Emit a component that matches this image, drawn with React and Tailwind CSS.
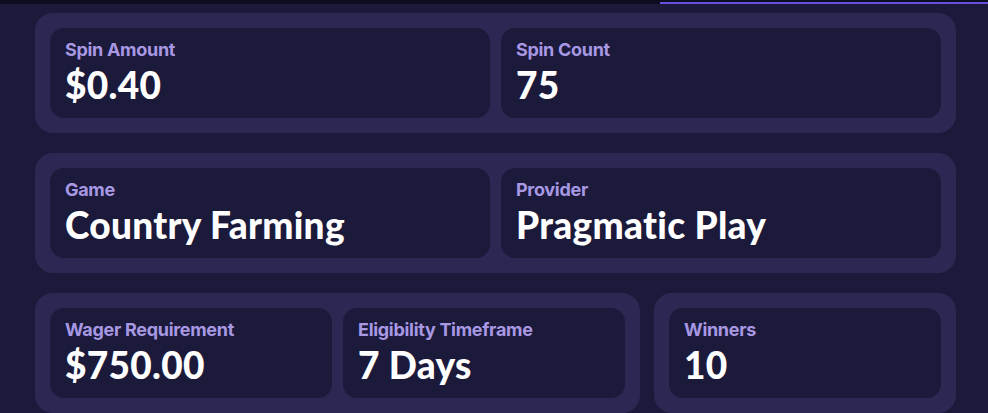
import React from "react";

const StatCard = ({ label, value, className = "" }) => {
  return (
    <div
      className={`flex h-[90px] flex-col rounded-[14px] bg-[#1c1a3b] px-[15px] pt-[12px] ${className}`}
    >
      <span className="font-['Inter',sans-serif] text-[18px] font-bold leading-5 tracking-[-0.3px] text-[#a898e4]">
        {label}
      </span>
      <span className="mt-[5px] font-['Lato',sans-serif] text-[37px] font-black leading-[40px] tracking-[0.3px] text-white">
        {value}
      </span>
    </div>
  );
};

const Panel = ({ children, className = "" }) => {
  return (
    <div
      className={`flex gap-[11px] rounded-[18px] bg-[#2d2853] p-[15px] ${className}`}
    >
      {children}
    </div>
  );
};

const App = () => {
  return (
    <div className="min-h-screen w-full bg-[#1c1a3b]">
      {/* top nav edge with active tab underline */}
      <div className="flex h-[4px] justify-end bg-[#0d0d20]">
        <div className="mt-[2px] h-[2px] w-[328px] bg-[#6c4ee0]" />
      </div>

      <div className="flex w-[921px] flex-col gap-[20px] pl-[35px] pt-[9px] box-content">
        <Panel>
          <StatCard label="Spin Amount" value="$0.40" className="flex-1" />
          <StatCard label="Spin Count" value="75" className="flex-1" />
        </Panel>

        <Panel>
          <StatCard label="Game" value="Country Farming" className="flex-1" />
          <StatCard label="Provider" value="Pragmatic Play" className="flex-1" />
        </Panel>

        <div className="flex gap-[14px]">
          <Panel className="flex-1">
            <StatCard
              label="Wager Requirement"
              value="$750.00"
              className="flex-1"
            />
            <StatCard
              label="Eligibility Timeframe"
              value="7 Days"
              className="flex-1"
            />
          </Panel>
          <Panel className="w-[302px]">
            <StatCard label="Winners" value="10" className="flex-1" />
          </Panel>
        </div>
      </div>
    </div>
  );
};

export default App;
